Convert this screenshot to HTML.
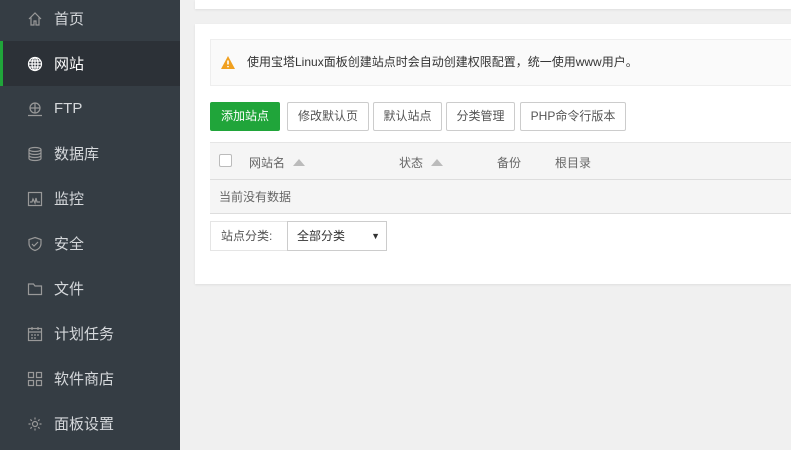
<!DOCTYPE html>
<html><head><meta charset="utf-8"><style>
*{margin:0;padding:0;box-sizing:border-box}
body{width:791px;height:450px;overflow:hidden;background:#f0f0f0;font-family:"Liberation Sans","Noto Sans CJK SC",sans-serif;position:relative}
.sb{position:absolute;left:0;top:0;width:180px;height:450px;background:#353d44}
.it{position:absolute;left:0;width:180px;height:45px;display:flex;align-items:center;color:#d5d8db;font-size:15px}
.it svg{position:absolute;left:27px;width:16px;height:16px}
.it span{position:absolute;left:54px}
.act{background:#2c3137;color:#fff}
.act:before{content:"";position:absolute;left:0;top:0;width:3px;height:45px;background:#20a53a}
.p1{position:absolute;left:195px;top:0;width:596px;height:9px;background:#fff;box-shadow:0 1px 2px #ddd}
.p2{position:absolute;left:195px;top:24px;width:596px;height:260px;background:#fff;box-shadow:0 1px 2px #ddd}
.note{position:absolute;left:15px;top:15px;width:600px;height:47px;background:#fafafa;border:1px solid #eee;font-size:12px;color:#333;line-height:45px;padding-left:36px}
.btn{position:absolute;top:78px;height:29px;border:1px solid #ccc;border-radius:2px;font-size:12px;color:#555;line-height:27px;text-align:center;background:#fff}
.th{position:absolute;left:15px;top:118px;width:600px;height:38px;background:#f5f5f5;border-top:1px solid #e5e5e5;border-bottom:1px solid #ddd;font-size:12px;color:#666}
.th span{position:absolute;top:11px}
.tri{display:inline-block;border-left:6px solid transparent;border-right:6px solid transparent;border-bottom:7px solid #bbb;margin-left:8px;vertical-align:1px}
.tr{position:absolute;left:15px;top:156px;width:600px;height:34px;background:#f5f5f5;border-bottom:1px solid #ddd;font-size:12px;color:#666;line-height:34px;padding-left:9px}
</style></head><body>
<div class="sb">
<div class="it" style="top:-4px"><svg viewBox="0 0 16 16" fill="none" stroke="#999" stroke-width="1.2"><path d="M2 8L8 2l6 6M4 6.5V14h3v-4h2v4h3V6.5"/></svg><span>首页</span></div>
<div class="it act" style="top:41px"><svg viewBox="0 0 16 16" fill="none" stroke="#fff" stroke-width="1.2"><circle cx="8" cy="8" r="6.5"/><ellipse cx="8" cy="8" rx="3" ry="6.5"/><path d="M1.5 8h13M2.5 5h11M2.5 11h11M8 1.5v13"/></svg><span>网站</span></div>
<div class="it" style="top:86px"><svg viewBox="0 0 16 16" fill="none" stroke="#999" stroke-width="1.2"><circle cx="8" cy="7" r="5"/><path d="M3 7h10M8 2v10M1 14.5h14"/></svg><span>FTP</span></div>
<div class="it" style="top:131px"><svg viewBox="0 0 16 16" fill="none" stroke="#999" stroke-width="1.2"><ellipse cx="8" cy="3.5" rx="6" ry="2"/><path d="M2 3.5v9c0 1.1 2.7 2 6 2s6-.9 6-2v-9M2 6.5c0 1.1 2.7 2 6 2s6-.9 6-2M2 9.5c0 1.1 2.7 2 6 2s6-.9 6-2"/></svg><span>数据库</span></div>
<div class="it" style="top:176px"><svg viewBox="0 0 16 16" fill="none" stroke="#999" stroke-width="1.2"><rect x="1.5" y="1.5" width="13" height="13"/><path d="M3 11h2l1-3 2 4 1-5 1 4h3"/></svg><span>监控</span></div>
<div class="it" style="top:221px"><svg viewBox="0 0 16 16" fill="none" stroke="#999" stroke-width="1.2"><path d="M8 1.5l6 2v4c0 3.5-2.7 6-6 7-3.3-1-6-3.5-6-7v-4z"/><path d="M5 8l2 2 4-4"/></svg><span>安全</span></div>
<div class="it" style="top:266px"><svg viewBox="0 0 16 16" fill="none" stroke="#999" stroke-width="1.2"><path d="M1.5 3h5l1.5 2h6.5v8.5h-13z"/></svg><span>文件</span></div>
<div class="it" style="top:311px"><svg viewBox="0 0 16 16" fill="none" stroke="#999" stroke-width="1.2"><rect x="1.5" y="2.5" width="13" height="12"/><path d="M1.5 6h13M5 1v3M11 1v3M4 9h2M7 9h2M10 9h2M4 12h2M7 12h2"/></svg><span>计划任务</span></div>
<div class="it" style="top:356px"><svg viewBox="0 0 16 16" fill="none" stroke="#999" stroke-width="1.2"><rect x="1.5" y="1.5" width="5" height="5"/><rect x="9.5" y="1.5" width="5" height="5"/><rect x="1.5" y="9.5" width="5" height="5"/><rect x="9.5" y="9.5" width="5" height="5"/></svg><span>软件商店</span></div>
<div class="it" style="top:401px"><svg viewBox="0 0 16 16" fill="none" stroke="#999" stroke-width="1.2"><circle cx="8" cy="8" r="2.5"/><path d="M8 1.5v2M8 12.5v2M1.5 8h2M12.5 8h2M3.4 3.4l1.4 1.4M11.2 11.2l1.4 1.4M3.4 12.6l1.4-1.4M11.2 4.8l1.4-1.4"/></svg><span>面板设置</span></div>
</div>
<div class="p1"></div>
<div class="p2">
<div class="note"><svg style="position:absolute;left:10px;top:16px" width="14" height="13" viewBox="0 0 14 13"><path d="M7 0L14 13H0z" fill="#f0a020"/><path d="M7 4.5v4M7 10v1.2" stroke="#fff" stroke-width="1.6"/></svg>使用宝塔Linux面板创建站点时会自动创建权限配置，统一使用www用户。</div>
<div class="btn" style="left:15px;width:70px;background:#20a53a;border-color:#20a53a;color:#fff">添加站点</div>
<div class="btn" style="left:92px;width:82px">修改默认页</div>
<div class="btn" style="left:178px;width:69px">默认站点</div>
<div class="btn" style="left:251px;width:69px">分类管理</div>
<div class="btn" style="left:325px;width:106px">PHP命令行版本</div>
<div class="th"><span style="left:9px;top:11px;width:13px;height:13px;border:1px solid #bbb;border-radius:2px;background:#fff"></span><span style="left:39px">网站名<i class="tri"></i></span><span style="left:189px">状态<i class="tri"></i></span><span style="left:287px">备份</span><span style="left:345px">根目录</span></div>
<div class="tr">当前没有数据</div>
<div style="position:absolute;left:15px;top:197px;width:78px;height:30px;border:1px solid #e5e5e5;font-size:12px;color:#555;line-height:28px;padding-left:10px">站点分类:</div>
<div style="position:absolute;left:92px;top:197px;width:100px;height:30px;border:1px solid #ccc;font-size:12px;color:#333;line-height:28px;padding-left:9px">全部分类<span style="position:absolute;right:6px;font-size:9px">▼</span></div>
</div>
</body></html>
